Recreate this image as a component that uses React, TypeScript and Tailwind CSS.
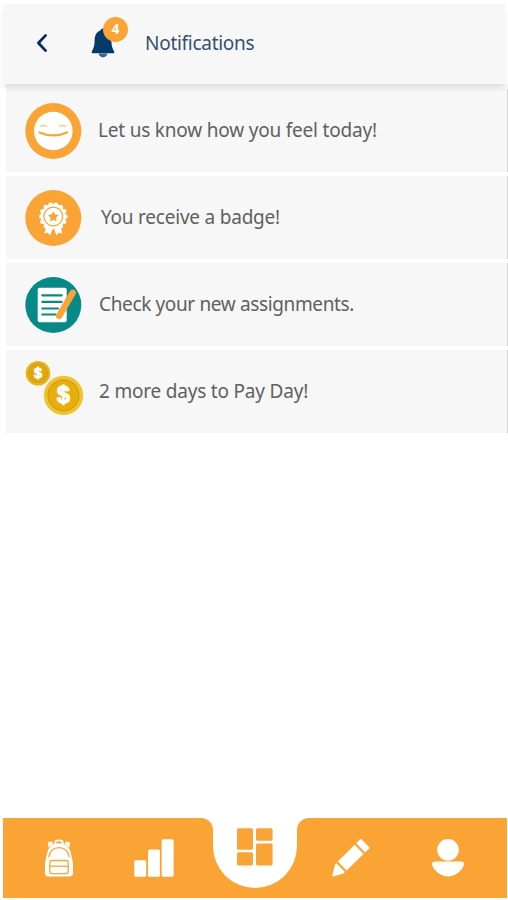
import type { ReactNode } from 'react';

// ── Icons ─────────────────────────────────────────────────────────────────────

function BellIcon() {
  return (
    <svg width="24" height="30" viewBox="0 0 24 30" fill="#043A6B">
      <circle cx="12" cy="3" r="2.6"/>
      <path d="M12 2 C6 2.6 3.6 7 3.6 12 C3.6 18 2.6 20.5 0.8 23.4 Q0.2 25.3 1.6 25.3 H22.4 Q23.8 25.3 23.2 23.4 C21.4 20.5 20.4 18 20.4 12 C20.4 7 18 2.6 12 2Z"/>
      <path d="M7.5 25.6 H16.5 Q15.4 29.4 12 29.4 Q8.6 29.4 7.5 25.6Z" fill="#3D6387"/>
    </svg>
  );
}

function SmileIcon() {
  return (
    <svg width="58" height="58" viewBox="0 0 58 58" fill="none">
      <circle cx="29.3" cy="29" r="28" fill="#FAA435"/>
      <circle cx="29.3" cy="29" r="19.3" fill="white"/>
      {/* Closed eyes */}
      <path d="M15.8 24.3 Q19.5 22.9 23.3 24.3" stroke="#FBC47C" strokeWidth="1.2"/>
      <path d="M34.8 24.3 Q38.3 22.9 42.5 24.3" stroke="#FBC47C" strokeWidth="1.2"/>
      {/* Mouth */}
      <path d="M15.5 30.4 Q29.3 36.4 43.1 30.4" stroke="#FAA435" strokeWidth="2.2" strokeLinecap="round"/>
    </svg>
  );
}

function AwardIcon() {
  const bumps = Array.from({ length: 14 }, (_, i) => (i * 2 * Math.PI) / 14);

  return (
    <svg width="58" height="58" viewBox="0 0 58 58" fill="none">
      <circle cx="29.3" cy="29" r="28" fill="#FAA435"/>
      {/* Ribbon tails */}
      <path d="M22.5 35 L20.3 44.6 L23.8 43.8 L26.2 46.4 L28.9 38.5Z" fill="white"/>
      <path d="M36.1 35 L38.3 44.6 L34.8 43.8 L32.4 46.4 L29.7 38.5Z" fill="white"/>
      {/* Scalloped rosette */}
      <circle cx="29.3" cy="27.5" r="12.4" fill="white"/>
      {bumps.map((a) => (
        <circle key={a} cx={29.3 + 12 * Math.cos(a)} cy={27.5 + 12 * Math.sin(a)} r="2.3" fill="white"/>
      ))}
      <circle cx="29.3" cy="27.5" r="9.4" stroke="#FAA435" strokeWidth="1.3"/>
      <path d="M29.3 22.2 L31 25.5 L34.7 26.1 L32.1 28.7 L32.6 32.4 L29.3 30.7 L26 32.4 L26.5 28.7 L23.9 26.1 L27.6 25.5Z" fill="#FAA435"/>
    </svg>
  );
}

function AssignmentIcon() {
  return (
    <svg width="58" height="58" viewBox="0 0 58 58" fill="none">
      <circle cx="29.3" cy="29" r="28" fill="#078A87"/>
      <rect x="13.7" y="11.8" width="29" height="34.5" rx="2" fill="white"/>
      <g stroke="#078A87" strokeWidth="2.2" strokeLinecap="round">
        <line x1="18.3" y1="19.3" x2="37.7" y2="19.3"/>
        <line x1="18.3" y1="25.8" x2="37.7" y2="25.8"/>
        <line x1="18.3" y1="32.5" x2="34" y2="32.5"/>
        <line x1="18.3" y1="38.5" x2="31.5" y2="38.5"/>
      </g>
      {/* Pencil */}
      <path d="M35.2 39.8 L48.7 16.8" stroke="#FAA435" strokeWidth="6.4" strokeLinecap="round"/>
    </svg>
  );
}

function CoinsIcon() {
  return (
    <svg width="60" height="58" viewBox="0 0 60 58" fill="none" className="relative -top-[3.5px]">
      <circle cx="14" cy="14.2" r="12.3" fill="#E4B51C"/>
      <circle cx="14" cy="14.2" r="9.5" fill="#DFA80F" stroke="#D59F0D" strokeWidth="1"/>
      <text x="14" y="19.2" textAnchor="middle" fill="white" stroke="white" strokeWidth="0.8" className="font-['Liberation_Sans',sans-serif] text-[14.5px] font-bold">$</text>
      <circle cx="39.5" cy="36.4" r="19.7" fill="#EFC432"/>
      <circle cx="39.5" cy="36.4" r="15.4" fill="#E8AF0C" stroke="#D99F0D" strokeWidth="1.3"/>
      <text x="39.5" y="44.4" textAnchor="middle" fill="white" stroke="white" strokeWidth="1.2" className="font-['Liberation_Sans',sans-serif] text-[23px] font-bold">$</text>
    </svg>
  );
}

function BackpackIcon() {
  return (
    <svg width="28" height="38" viewBox="0 0 28 38" fill="none">
      {/* Strap tops */}
      <path d="M2.8 3.2 L6.5 2.5 L8.5 5 L3.6 8.5Z" fill="white"/>
      <path d="M25.2 3.2 L21.5 2.5 L19.5 5 L24.4 8.5Z" fill="white"/>
      <path d="M10.3 5 V3.5 Q10.3 1.3 14 1.3 Q17.7 1.3 17.7 3.5 V5" stroke="white" strokeWidth="1.8"/>
      <path d="M14 4.2 C21 4.2 25 8.5 26 14.5 L28 24 V34 Q28 37.5 24.5 37.5 H3.5 Q0 37.5 0 34 V24 L2 14.5 C3 8.5 7 4.2 14 4.2Z" fill="white"/>
      <path d="M3.6 18.3 C5 11.5 8.5 8.6 14 8.6 C19.5 8.6 23 11.5 24.4 18.3" stroke="#FAA435" strokeWidth="1.2"/>
      <rect x="4.8" y="21.5" width="18.4" height="13.2" rx="1.8" stroke="#FAA435" strokeWidth="1.3"/>
      <path d="M5 27.2 H23" stroke="#FAA435" strokeWidth="1.3"/>
    </svg>
  );
}

function ChartIcon() {
  return (
    <svg width="40" height="38" viewBox="0 0 40 38" fill="white">
      <rect x="0.3" y="21.3" width="11.9" height="16.4" rx="1.5"/>
      <rect x="14" y="10.6" width="11.9" height="27.1" rx="1.5"/>
      <rect x="27.7" y="0.3" width="11.9" height="37.4" rx="1.5"/>
    </svg>
  );
}

function DashboardIcon() {
  return (
    <svg width="36" height="38" viewBox="0 0 36 38" fill="#FAA435">
      <rect x="0" y="0.3" width="16" height="21.5" rx="1.5"/>
      <rect x="19" y="0.3" width="16.6" height="12.5" rx="1.5"/>
      <rect x="0" y="24.3" width="16" height="13.2" rx="1.5"/>
      <rect x="19" y="15.4" width="16.6" height="22.1" rx="1.5"/>
    </svg>
  );
}

function PencilIcon() {
  return (
    <svg width="38" height="38" viewBox="0 0 38 38" fill="white">
      <path d="M27.8 0.5 Q28.8 -0.3 29.7 0.5 L37 8 Q37.8 8.9 37 9.8 L33 13.4 L24.2 4.2Z"/>
      <path d="M22.7 5.8 L31.5 15 L14.6 31.6 L5.8 22.6Z"/>
      <path d="M4.4 24.2 L13 33 L11.5 34.4 L1.3 37.4 Q0 37.5 0.4 36 L3 25.8Z"/>
    </svg>
  );
}

function UserIcon() {
  return (
    <svg width="34" height="38" viewBox="0 0 34 38" fill="white">
      <circle cx="17" cy="10.8" r="10.8"/>
      <path d="M4 22.5 H30 Q34.5 23 32.3 27.5 C29 33.5 23.5 37.4 17 37.4 C10.5 37.4 5 33.5 1.7 27.5 Q-0.5 23 4 22.5Z"/>
    </svg>
  );
}

// ── Rows ──────────────────────────────────────────────────────────────────────

function NotificationRow({ icon, children }: { icon: ReactNode; children: ReactNode }) {
  return (
    <li className="flex h-[83px] items-center border-r border-[#d4d4d4] bg-[#f7f7f7] pl-[18px]">
      <div className="w-[74px] shrink-0">{icon}</div>
      {children}
    </li>
  );
}

// ── App ───────────────────────────────────────────────────────────────────────

export default function App() {
  return (
    <div className="flex h-[900px] w-[508px] flex-col bg-white pt-1 pb-0.5 font-['Noto_Sans',sans-serif] text-[19px] leading-[26px] text-[#606060]">
      <header className="relative z-10 ml-[3px] flex h-[80px] w-[502px] items-center bg-[#f7f7f7] shadow-[0_5px_6px_-1px_rgba(0,0,0,0.1)]">
        <button className="mb-0.5 ml-[33px]" aria-label="Back">
          <svg width="12" height="20" viewBox="0 0 12 20" fill="none">
            <path d="M9.6 2.4 L2.4 10 L9.6 17.6" stroke="#0B2A5B" strokeWidth="2.8" strokeLinecap="round" strokeLinejoin="round"/>
          </svg>
        </button>
        <div className="relative mb-[7px] ml-[43px] pt-1">
          <BellIcon/>
          <span className="absolute -top-[7px] left-[12px] flex size-[25px] items-center justify-center rounded-full bg-[#faa435] text-[14px] font-bold text-white">
            4
          </span>
        </div>
        <h1 className="mb-[3px] ml-[30px] tracking-[-0.28px] text-[#34506f]">Notifications</h1>
      </header>

      {/* First row starts flush under the header, beneath its shadow */}
      <ul className="ml-1.5 flex w-[502px] flex-col gap-1 bg-[linear-gradient(#f7f7f7_5px,transparent_5px)] pt-[5px]">
        <NotificationRow icon={<SmileIcon/>}>
          <span className="mb-0.5 tracking-[-0.2px]">Let us know how you feel today!</span>
        </NotificationRow>
        <NotificationRow icon={<AwardIcon/>}>
          <span className="mb-0.5 ml-[3px] tracking-[-0.22px]">You receive a badge!</span>
        </NotificationRow>
        <NotificationRow icon={<AssignmentIcon/>}>
          <span className="mb-0.5 ml-px tracking-[-0.36px]">Check your new assignments.</span>
        </NotificationRow>
        <NotificationRow icon={<CoinsIcon/>}>
          <span className="mb-0.5 ml-px tracking-[-0.2px]">2 more days to Pay Day!</span>
        </NotificationRow>
      </ul>

      <nav className="mt-auto ml-[3px] flex h-[80px] w-[504px]">
        <div className="flex w-[210px] items-center rounded-tr-[12px] bg-[#faa435] pl-[42px]">
          <BackpackIcon/>
          <div className="ml-[61px]"><ChartIcon/></div>
        </div>
        <div className="w-[84px] bg-[#faa435]">
          <div className="flex h-[70px] justify-center rounded-b-[42px] bg-white pt-[10px]">
            <DashboardIcon/>
          </div>
        </div>
        <div className="flex w-[210px] items-center rounded-tl-[12px] bg-[#faa435] pl-[35px]">
          <PencilIcon/>
          <div className="ml-[61px]"><UserIcon/></div>
        </div>
      </nav>
    </div>
  );
}
